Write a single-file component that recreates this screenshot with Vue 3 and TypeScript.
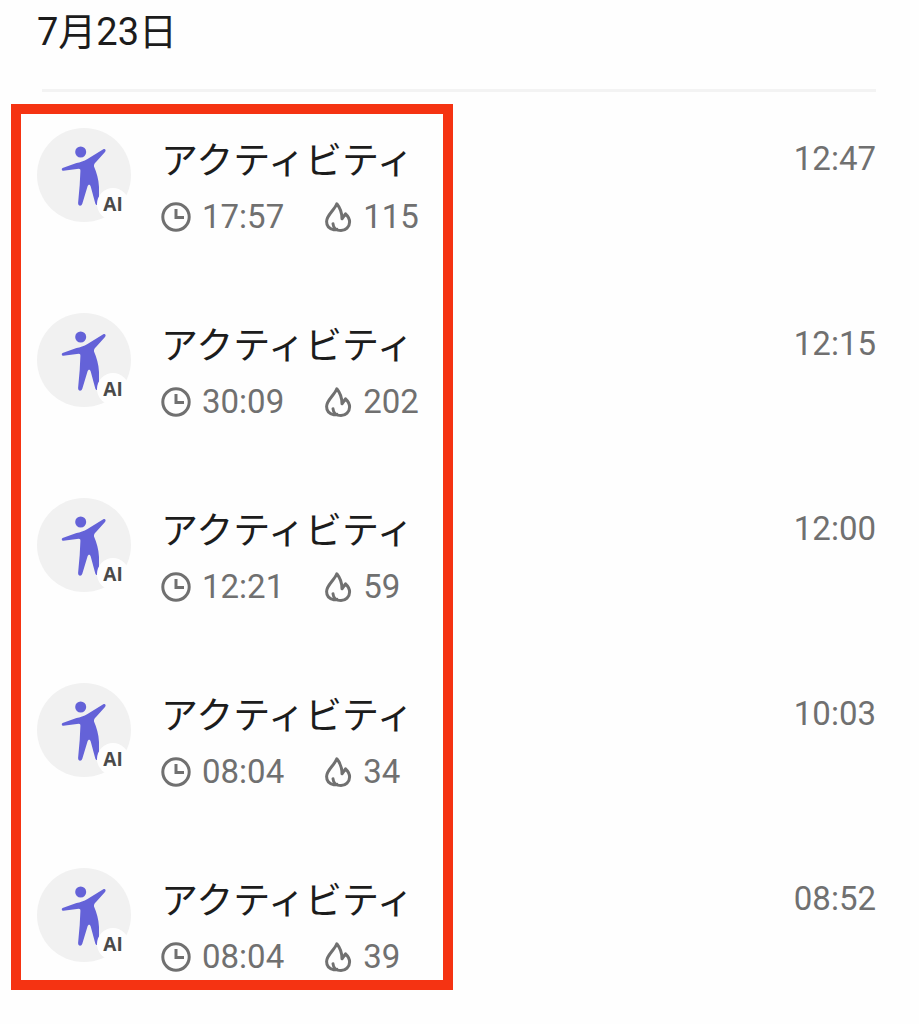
<script setup lang="ts">
interface Activity {
  duration: string
  calories: number
  time: string
}

const activities: Activity[] = [
  { duration: '17:57', calories: 115, time: '12:47' },
  { duration: '30:09', calories: 202, time: '12:15' },
  { duration: '12:21', calories: 59, time: '12:00' },
  { duration: '08:04', calories: 34, time: '10:03' },
  { duration: '08:04', calories: 39, time: '08:52' },
]
</script>

<template>
  <main class="page">
    <header class="day">
      <h1 class="date">7月23日</h1>
    </header>
    <section class="activities">
      <ul class="list">
        <li v-for="activity in activities" :key="activity.time" class="row">
          <div class="avatar">
            <svg class="person" viewBox="0 0 94 94" aria-hidden="true">
              <circle cx="43.700" cy="24" r="5.500" />
              <path
                d="M25.600 39.900 C24.200 40.500 24.600 42.900 26.300 42.700 L41.800 40.700 C43 40.700 43.500 41.500 43.400 43 L42.700 57 L41.100 75 C41 78.400 44.600 78.400 45.300 75.800 L50.500 58.500 C51.300 56 53 56 53.700 58.500 L58.300 75.500 C59.200 78 62.400 77.500 62 74.500 L62 59 C61.700 51 59.500 44.500 57 38.500 C56.800 36.500 57.500 35.300 59 34 L68 24 C69.400 22.200 68.200 20.300 66.300 21.200 L50.500 30.900 C47 33 43 34 39.500 35.100 Z"
              />
            </svg>
            <span class="badge">AI</span>
          </div>
          <div class="details">
            <h2 class="title">アクティビティ</h2>
            <div class="stats">
              <span class="stat">
                <svg class="clock" viewBox="0 0 30 30" aria-hidden="true">
                  <circle cx="15" cy="15" r="13.200" />
                  <path d="M15 7V15.500H23" />
                </svg>
                {{ activity.duration }}
              </span>
              <span class="stat">
                <svg class="flame" viewBox="0 0 28 32" aria-hidden="true">
                  <path
                    d="M9.200 28.600C5.200 27.600 2.600 24.500 2.600 20.600C2.600 14 10.300 9.500 12.800 2.800C15.800 6.500 18 11.500 18 17.800L21.500 12.800C24.300 15.300 25.600 18 25.600 21C25.600 25.800 21.600 29.500 17 29.500C12.300 29.500 9.200 26.800 9 22.800M9.200 28.600C10.800 28.900 12 28.700 13 28.300"
                  />
                </svg>
                {{ activity.calories }}
              </span>
            </div>
          </div>
          <time class="time">{{ activity.time }}</time>
        </li>
      </ul>
      <div class="highlight" aria-hidden="true"></div>
    </section>
  </main>
</template>

<style>
body {
  margin: 0;
  background: #fefefe;
}
</style>

<style scoped>
.page {
  font-family: Roboto, 'Noto Sans CJK JP', sans-serif;
  color: #1c1c1c;
  padding-bottom: 34px;
}
.day {
  margin: 0 43px 0 42px;
  padding: 8px 0 33px;
  border-bottom: 3px solid #f3f3f3;
}
.date {
  margin: 0 0 0 -5px;
  font-size: 38px;
  line-height: 48px;
  font-weight: 400;
}
.activities {
  position: relative;
  margin-top: 12px;
  padding: 24px 43px 13px 37px;
}
.list {
  display: flex;
  flex-direction: column;
  gap: 76px;
  margin: 0;
  padding: 0;
  list-style: none;
}
.row {
  display: flex;
  align-items: flex-start;
}
.avatar {
  position: relative;
  flex: none;
  width: 94px;
  height: 94px;
  border-radius: 50%;
  background: #f1f1f1;
}
.person {
  display: block;
  width: 94px;
  height: 94px;
  fill: #6462d8;
}
.badge {
  position: absolute;
  right: 2px;
  bottom: 2px;
  width: 32px;
  height: 32px;
  border-radius: 50%;
  background: #fefefe;
  color: #4a4a4a;
  font-family: 'Open Sans', sans-serif;
  font-size: 19px;
  line-height: 32px;
  font-weight: 700;
  text-align: center;
}
.details {
  flex: 1;
  margin-left: 30px;
}
.title {
  margin: 0;
  padding: 8px 0 9px;
  font-size: 37px;
  line-height: 52px;
  font-weight: 400;
}
.stats {
  display: flex;
  gap: 40px;
}
.stat {
  display: flex;
  align-items: center;
  gap: 11px;
  color: #707070;
  font-size: 33px;
  line-height: 40px;
}
.clock,
.flame {
  fill: none;
  stroke: #707070;
  stroke-width: 3;
}
.flame {
  width: 28px;
  height: 32px;
  stroke-linejoin: round;
  stroke-linecap: round;
}
.clock {
  width: 30px;
  height: 30px;
}
.time {
  padding-top: 11px;
  color: #707070;
  font-size: 33px;
  line-height: 40px;
}
.highlight {
  position: absolute;
  top: 0;
  bottom: 0;
  left: 11px;
  width: 422px;
  border: 10px solid #f53312;
  pointer-events: none;
}
</style>
